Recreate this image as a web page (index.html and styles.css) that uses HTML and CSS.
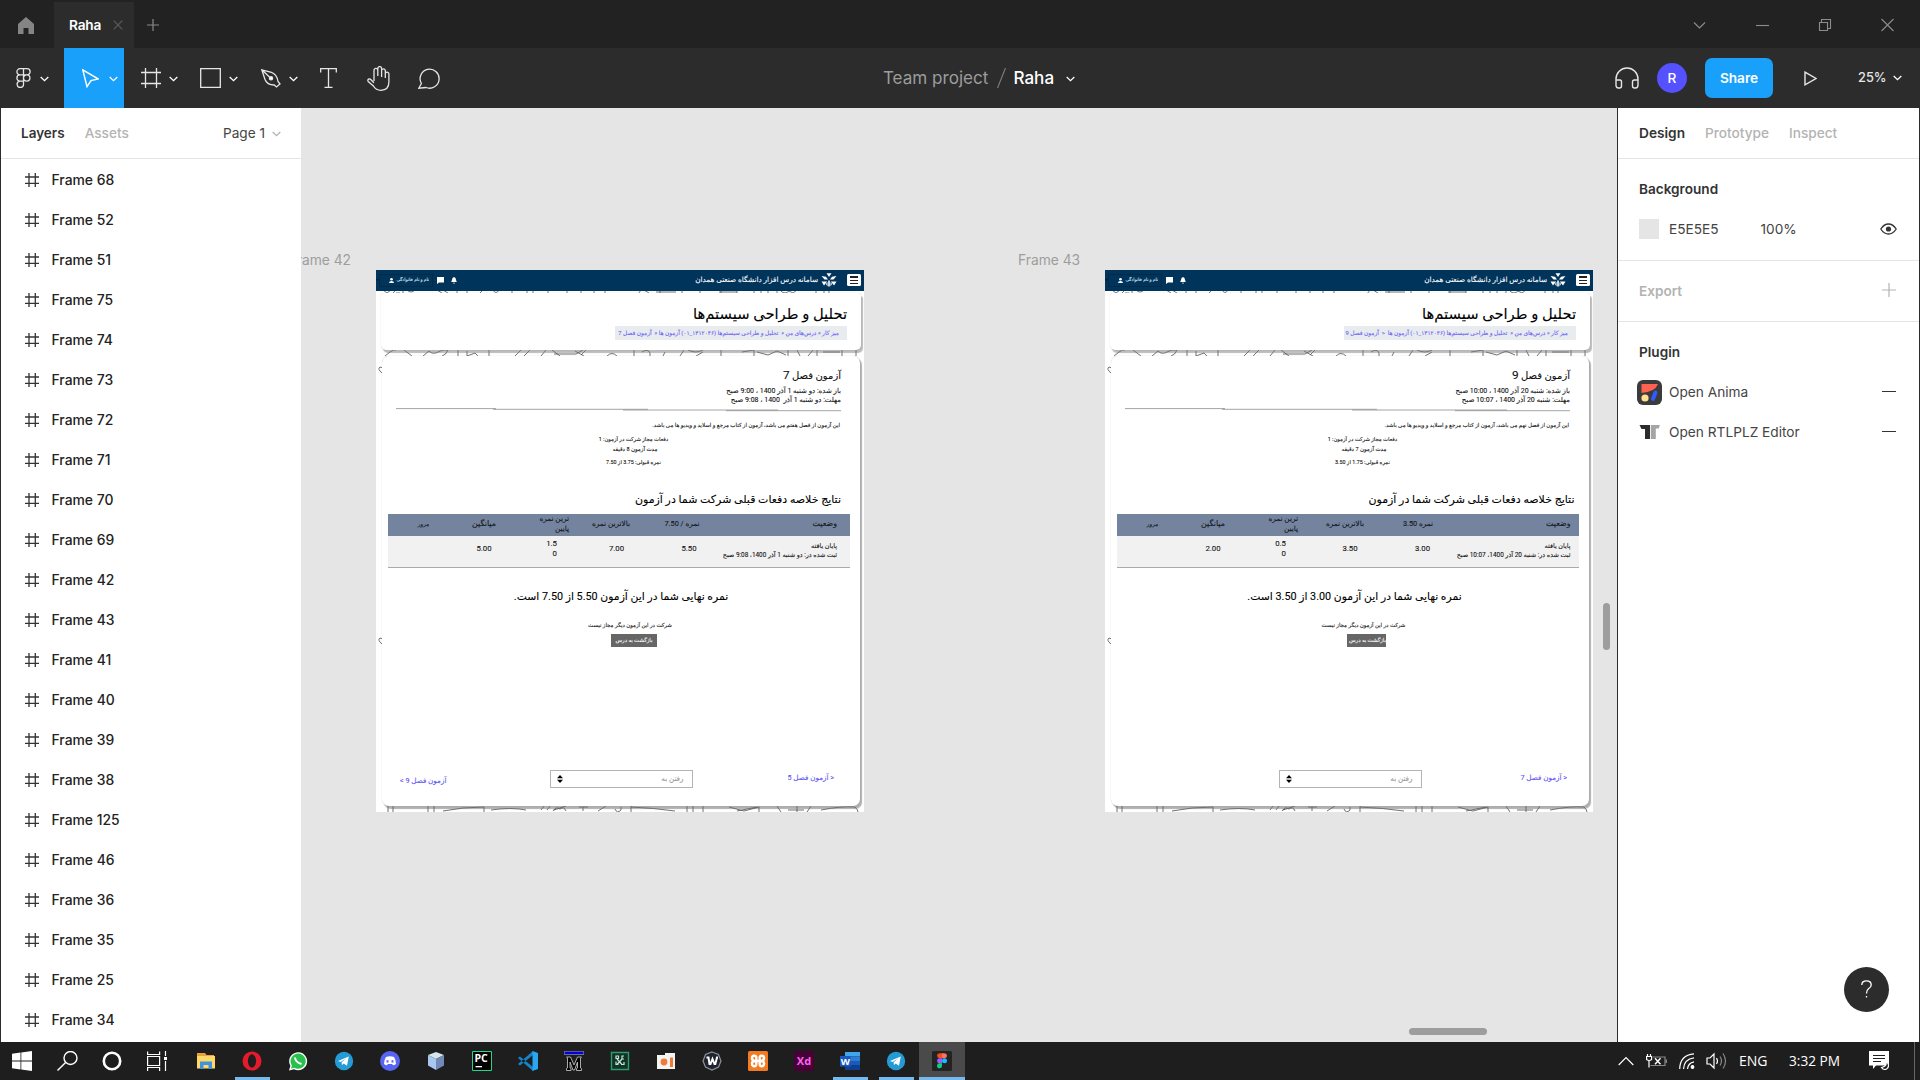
FILE: index.html
```html
<!DOCTYPE html>
<html lang="en">
<head>
<meta charset="utf-8">
<title>Raha</title>
<link rel="stylesheet" href="styles.css">
</head>
<body>
<svg class="defs" width="0" height="0">
  <symbol id="hash" viewBox="0 0 14 14"><path d="M4 0v14M10.3 0v14M0 4h14M0 10.3h14"/></symbol>
  <symbol id="chev" viewBox="0 0 9 6"><path d="M.7 1l3.8 3.7L8.300 1"/></symbol>
  <symbol id="tg" viewBox="0 0 20 20"><circle cx="10" cy="10" r="9.200" fill="#259bd5"/><path fill="#fff" d="M4 9.900L14.800 5.500 13 14.800 9.700 12.400 8 14 7.600 11.300 12 7.600 6.500 11z"/></symbol>
  <symbol id="uni" viewBox="0 0 16 14"><path d="M5.500.3h5L8 4zM.5 3l4.500.8L7 6.500H3.500zM15.500 3l-4.500.8L9 6.500h3.500zM.5 8.500h5.700L3 12.500zM15.500 8.500H9.800l3.200 4zM7.200 7.500h1.600V13.500H7.200zM5 11l1.500-2v4.500zM11 11L9.500 9v4.500z"/></symbol>
  <symbol id="doodle" viewBox="0 0 488 542">
    <path d="M7 20l4 3 4-3M17 23l3-3M20 23h4M27 20v3M31 20q4 4 8 0M61 20l5 3M67 20l5 3M81 20v3M91 20v3M104 23l3-3M117 20q3 5 6 0M136 20v3M151 20v3M157 20v3M172 20v3M191 20v3M205 20v3M218 20v3M229 20v3M262 24l3-4M268 20l5 3M280 22h20M284 20v3M306 20v3M324 20v3M345 20v3M343 22h18M361 20v3M378 20v3M385 20v3M392 20v3M401 20v3M405 21q4 4 8 0l4 2 4-3M440 20v3M448 20v3M453 20v3"/>
    <path d="M9 86l5-4q4-3 6-2M28 80l8 6M47 86l6-5q4 4 9 1t10-2q-2 5-6 6M82 80v6M91 81v5l8-3 3 3M113 80v6M139 86l6-6M148 86l6-6M165 86l5-6M176 80l8 6M178 84h22l7-4M199 81l9 5M205 85l5-5M231 86q5-5 10 0M258 80v6M266 82q6-4 8 1v3M287 86l2-4M304 86l4-6M312 80q8 4 15 0M327 82l-7 4M345 80v6M366 82l12-2v6M381 82l11 3 9-4 9 4M412 80v6M421 80l3 6M437 80l-5 6M441 80v6M447 82h17M466 80v6M480 80v6"/>
    <path d="M6 103q-5-4-2-6l3 1M6 374q-5-4-2-6l3 1M12 536v6M17 536v6M52 536v6M58 536v6M67 541q20-4 41-4M108 537v5M115 540q20-3 35 0M165 540l3-4M171 540l3-4M177 541q3-5 7-2 4-3 6 2M178 540l12-4M203 537h9M207 537v4M222 541l8-5M239 539q2 5 6 1v-3M255 536v6M255 537q23 1 44 4M311 536v6M317 536v6M327 536v6M353 537l15 4 15-4v5M361 541l20-4M401 536l4 6M421 536v6M412 540h16M435 536l-4 6M445 540q20-4 34-3 3 3 3 5"/>
  </symbol>
</svg>

<div class="titlebar">
  <div class="home"><svg width="16" height="17" viewBox="0 0 16 17"><path fill="#858585" d="M0 7l8-7 8 7v10h-5.500v-6h-5v6H0z"/></svg></div>
  <div class="tab"><span>Raha</span><svg width="10" height="10" viewBox="0 0 10 10"><path d="M.7.700l8.600 8.600M9.300.700L.7 9.300"/></svg></div>
  <svg class="plus" width="12" height="12" viewBox="0 0 12 12"><path d="M6 0v12M0 6h12"/></svg>
  <div class="winctl">
    <svg width="62" height="20" viewBox="0 0 62 20"><path d="M25 7.500l5.500 5.500L36 7.500"/></svg>
    <svg width="62" height="20" viewBox="0 0 62 20"><path d="M25 10.500h13"/></svg>
    <svg width="62" height="20" viewBox="0 0 62 20"><path d="M26.500 7.500h8v8h-8zM28.500 7.500v-3h9v9h-3"/></svg>
    <svg width="62" height="20" viewBox="0 0 62 20"><path d="M26.500 4l12 12M38.500 4l-12 12"/></svg>
  </div>
</div>

<div class="toolbar">
  <div class="tools">
    <div class="tool menu"><svg width="15" height="20" viewBox="0 0 15 20"><path d="M4 .7h3.500v6.200H4A3.100 3.100 0 0 1 4 .7zM7.500.7H11a3.100 3.100 0 0 1 0 6.200H7.500zM4 6.900h3.500v6.200H4a3.100 3.100 0 0 1 0-6.200zM7.500 10A3.200 3.100 0 1 0 10.700 6.900 3.100 3.100 0 0 0 7.500 10zM4 13.100h3.500v3a3.200 3.200 0 1 1-3.500-3z"/></svg><svg class="cv" width="9" height="6"><use href="#chev"/></svg></div>
    <div class="tool on"><svg width="17" height="19" viewBox="0 0 17 19"><path d="M.8.900l15.200 9-7 1.700-4 6z"/></svg><svg class="cv" width="9" height="6"><use href="#chev"/></svg></div>
    <div class="tool"><svg width="20" height="20" viewBox="0 0 20 20"><path d="M4.500 0v20M15.500 0v20M0 4.500h20M0 15.500h20"/></svg><svg class="cv" width="9" height="6"><use href="#chev"/></svg></div>
    <div class="tool"><svg width="21" height="20" viewBox="0 0 21 20"><path d="M.7.700h19.600v18.600H.7z"/></svg><svg class="cv" width="9" height="6"><use href="#chev"/></svg></div>
    <div class="tool"><svg width="20" height="19" viewBox="0 0 20 19"><path d="M.8.800l9.700 2.500q5.500 2 6.500 9.200l2 2.500-3.500 3-2.300-2Q6 16 4 10.500zM.8.800l8.400 8"/><circle cx="10" cy="9.300" r="1.600" fill="#fff"/></svg><svg class="cv" width="9" height="6"><use href="#chev"/></svg></div>
    <div class="tool one"><svg width="17" height="20" viewBox="0 0 17 20"><path d="M.7 4.500V.700h15.600v3.800M8.500.700v18.600M4.500 19.300h8"/></svg></div>
    <div class="tool one"><svg width="23" height="25" viewBox="0 0 23 25"><path d="M7 15V4.300a1.900 1.900 0 0 1 3.800 0V10 2.500a1.900 1.900 0 0 1 3.800 0V11 4.300a1.900 1.900 0 0 1 3.700 0V12 8a1.800 1.800 0 0 1 3.600 0v8q0 8-8 8.300-5 0-7.500-4.300L1.200 15.500q-1-2 .8-2.500 1-.2 2 .8l3 3"/></svg></div>
    <div class="tool one"><svg width="22" height="21" viewBox="0 0 22 21"><path d="M.8 20.200l2.600-4.700A9.500 9.500 0 1 1 8 19.500z"/></svg></div>
  </div>
  <div class="filename"><span class="team">Team project</span><svg width="9" height="20" viewBox="0 0 9 20"><path d="M8.500 0L.5 20"/></svg><b>Raha</b><svg class="cv" width="9" height="6"><use href="#chev"/></svg></div>
  <div class="actions">
    <svg width="24" height="22" viewBox="0 0 24 22"><path d="M1 14V12a11 11 0 0 1 22 0v6q0 3-2.500 3h-1q-2 0-2-2v-4q0-2 2-2H23M1 13h4q1.500 0 1.500 2v4q0 2-2 2h-1Q1 21 1 18z"/></svg>
    <span class="avatar">R</span>
    <span class="share">Share</span>
    <svg class="play" width="13" height="15" viewBox="0 0 13 15"><path d="M1 1.200L12 7.500 1 13.800z"/></svg>
    <span class="zoom">25%</span><svg class="cv" width="9" height="6"><use href="#chev"/></svg>
  </div>
</div>

<div class="work">
  <aside class="left">
    <div class="tabs"><b>Layers</b><span>Assets</span><i>Page 1</i><svg class="cv" width="9" height="6"><use href="#chev"/></svg></div>
    <div class="layer"><svg width="14" height="14"><use href="#hash"/></svg>Frame 68</div>
    <div class="layer"><svg width="14" height="14"><use href="#hash"/></svg>Frame 52</div>
    <div class="layer"><svg width="14" height="14"><use href="#hash"/></svg>Frame 51</div>
    <div class="layer"><svg width="14" height="14"><use href="#hash"/></svg>Frame 75</div>
    <div class="layer"><svg width="14" height="14"><use href="#hash"/></svg>Frame 74</div>
    <div class="layer"><svg width="14" height="14"><use href="#hash"/></svg>Frame 73</div>
    <div class="layer"><svg width="14" height="14"><use href="#hash"/></svg>Frame 72</div>
    <div class="layer"><svg width="14" height="14"><use href="#hash"/></svg>Frame 71</div>
    <div class="layer"><svg width="14" height="14"><use href="#hash"/></svg>Frame 70</div>
    <div class="layer"><svg width="14" height="14"><use href="#hash"/></svg>Frame 69</div>
    <div class="layer"><svg width="14" height="14"><use href="#hash"/></svg>Frame 42</div>
    <div class="layer"><svg width="14" height="14"><use href="#hash"/></svg>Frame 43</div>
    <div class="layer"><svg width="14" height="14"><use href="#hash"/></svg>Frame 41</div>
    <div class="layer"><svg width="14" height="14"><use href="#hash"/></svg>Frame 40</div>
    <div class="layer"><svg width="14" height="14"><use href="#hash"/></svg>Frame 39</div>
    <div class="layer"><svg width="14" height="14"><use href="#hash"/></svg>Frame 38</div>
    <div class="layer"><svg width="14" height="14"><use href="#hash"/></svg>Frame 125</div>
    <div class="layer"><svg width="14" height="14"><use href="#hash"/></svg>Frame 46</div>
    <div class="layer"><svg width="14" height="14"><use href="#hash"/></svg>Frame 36</div>
    <div class="layer"><svg width="14" height="14"><use href="#hash"/></svg>Frame 35</div>
    <div class="layer"><svg width="14" height="14"><use href="#hash"/></svg>Frame 25</div>
    <div class="layer"><svg width="14" height="14"><use href="#hash"/></svg>Frame 34</div>
  </aside>

  <main class="canvas">
    <div class="label l42">Frame 42</div>
    <div class="label l43">Frame 43</div>

    <section class="board b42" dir="rtl">
      <svg class="doodles" width="488" height="542"><use href="#doodle"/></svg>
      <header class="nav">
        <span class="burger"><i></i><i></i><i></i></span>
        <svg class="uni" width="16" height="14"><use href="#uni"/></svg>
        <span class="site">سامانه درس افزار دانشگاه صنعتی همدان</span>
        <svg class="bell" width="6" height="7" viewBox="0 0 6 7"><path d="M3 0q2 .5 2 3l.8 2H.2L1 3Q1 .5 3 0zM2 5.700h2L3 7z"/></svg>
        <svg class="chat" width="7" height="7" viewBox="0 0 7 7"><path d="M0 0h7v5.500H2L0 7z"/></svg>
        <span class="user">نام و نام خانوادگی<svg width="5" height="5" viewBox="0 0 5 5"><circle cx="2.500" cy="1.300" r="1.300"/><path d="M0 5q0-2 2.500-2T5 5z"/></svg></span>
        <svg class="caret" width="3" height="2" viewBox="0 0 3 2"><path d="M0 0h3L1.500 2z"/></svg>
      </header>
      <div class="card head">
        <h1>تحلیل و طراحی سیستم‌ها</h1>
        <div class="crumbs">میز کار « درس‌های من « &nbsp;تحلیل و طراحی سیستم‌ها (۱۳۱۲۰۴۶_۰۱) آزمون ها « &nbsp;آزمون فصل 7</div>
      </div>
      <div class="card body">
        <h2>آزمون فصل <span>7</span></h2>
        <p class="date">باز شده: دو شنبه 1 آذر 1400 ، 9:00 صبح</p>
        <p class="date">مهلت: دو شنبه 1 آذر &nbsp;1400 ، 9:08 صبح</p>
        <svg class="rule" width="445" height="4" viewBox="0 0 445 4"><path d="M0 .6h100M97 1.300h155M227 2h155M330 2.700h115"/></svg>
        <p class="desc">این آزمون از فصل هفتم می باشد، آزمون از کتاب مرجع و اسلاید و ویدیو ها می باشد.</p>
        <p class="info i1">دفعات مجاز شرکت در آزمون: 1</p>
        <p class="info i2">مدت آزمون 8 دقیقه</p>
        <p class="info i3">نمره قبولی: 3.75 از 7.50</p>
        <h3>نتایج خلاصه دفعات قبلی شرکت شما در آزمون</h3>
        <div class="grid gh"><span class="c-status">وضعیت</span><span class="c-grade">نمره / 7.50</span><span>بالاترین نمره</span><span class="c-low">ترین نمره<br>پایین</span><span class="c-avg">میانگین</span><span class="c-rev">مرور</span></div>
        <div class="grid gb"><span class="c-status">پایان یافته<br>ثبت شده در: دو شنبه 1 آذر 1400، 9:08 صبح</span><span class="c-grade">5.50</span><span class="c-high">7.00</span><span class="c-low">1.5<br>0</span><span class="c-avg">5.00</span><span></span></div>
        <p class="final">نمره نهایی شما در این آزمون 5.50 از 7.50 است.</p>
        <p class="note">شرکت در این آزمون دیگر مجاز نیست</p>
        <div class="back"><span>بازگشت به درس</span></div>
        <div class="pager"><a class="prev">&lt; آزمون فصل 5</a><span class="select">رفتن به<svg width="6" height="8" viewBox="0 0 6 8"><path d="M0 3.200L3 0l3 3.200zM0 4.800h6L3 8z"/></svg></span><a class="next">آزمون فصل 9 &gt;</a></div>
      </div>
    </section>

    <section class="board b43" dir="rtl">
      <svg class="doodles" width="488" height="542"><use href="#doodle"/></svg>
      <header class="nav">
        <span class="burger"><i></i><i></i><i></i></span>
        <svg class="uni" width="16" height="14"><use href="#uni"/></svg>
        <span class="site">سامانه درس افزار دانشگاه صنعتی همدان</span>
        <svg class="bell" width="6" height="7" viewBox="0 0 6 7"><path d="M3 0q2 .5 2 3l.8 2H.2L1 3Q1 .5 3 0zM2 5.700h2L3 7z"/></svg>
        <svg class="chat" width="7" height="7" viewBox="0 0 7 7"><path d="M0 0h7v5.500H2L0 7z"/></svg>
        <span class="user">نام و نام خانوادگی<svg width="5" height="5" viewBox="0 0 5 5"><circle cx="2.500" cy="1.300" r="1.300"/><path d="M0 5q0-2 2.500-2T5 5z"/></svg></span>
        <svg class="caret" width="3" height="2" viewBox="0 0 3 2"><path d="M0 0h3L1.500 2z"/></svg>
      </header>
      <div class="card head">
        <h1>تحلیل و طراحی سیستم‌ها</h1>
        <div class="crumbs">میز کار « درس‌های من « &nbsp;تحلیل و طراحی سیستم‌ها (۱۳۱۲۰۴۶_۰۱) آزمون ها &nbsp;&lt; &nbsp;آزمون فصل 9</div>
      </div>
      <div class="card body">
        <h2>آزمون فصل <span>9</span></h2>
        <p class="date">باز شده: شنبه 20 آذر 1400 ، 10:00 صبح</p>
        <p class="date">مهلت: شنبه 20 آذر 1400 ، 10:07 صبح</p>
        <svg class="rule" width="445" height="4" viewBox="0 0 445 4"><path d="M0 .6h100M97 1.300h155M227 2h155M330 2.700h115"/></svg>
        <p class="desc">این آزمون از فصل نهم می باشد، آزمون از کتاب مرجع و اسلاید و ویدیو ها می باشد.</p>
        <p class="info i1">دفعات مجاز شرکت در آزمون: 1</p>
        <p class="info i2">مدت آزمون 7 دقیقه</p>
        <p class="info i3">نمره قبولی: 1.75 از 3.50</p>
        <h3>نتایج خلاصه دفعات قبلی شرکت شما در آزمون</h3>
        <div class="grid gh"><span class="c-status">وضعیت</span><span class="c-grade">نمره 3.50</span><span class="c-high">بالاترین نمره</span><span class="c-low">ترین نمره<br>پایین</span><span class="c-avg">میانگین</span><span class="c-rev">مرور</span></div>
        <div class="grid gb"><span class="c-status">پایان یافته<br>ثبت شده در: شنبه 20 آذر 1400، 10:07 صبح</span><span class="c-grade">3.00</span><span class="c-high">3.50</span><span class="c-low">0.5<br>0</span><span class="c-avg">2.00</span><span></span></div>
        <p class="final">نمره نهایی شما در این آزمون 3.00 از 3.50 است.</p>
        <p class="note">شرکت در این آزمون دیگر مجاز نیست</p>
        <div class="back"><span>بازگشت به درس</span></div>
        <div class="pager"><a class="prev">&lt; آزمون فصل 7</a><span class="select">رفتن به<svg width="6" height="8" viewBox="0 0 6 8"><path d="M0 3.200L3 0l3 3.200zM0 4.800h6L3 8z"/></svg></span><a class="next"></a></div>
      </div>
    </section>
    <div class="thumb-v"></div>
    <div class="thumb-h"></div>
  </main>

  <aside class="right">
    <div class="tabs"><b>Design</b><span>Prototype</span><span>Inspect</span></div>
    <div class="sec bg">
      <h4>Background</h4>
      <div class="row"><i class="swatch"></i><span class="hex">E5E5E5</span><span>100%</span><svg class="end" width="17" height="12" viewBox="0 0 17 12"><path fill="none" stroke="#333" stroke-width="1.300" d="M.8 6Q4 1 8.500 1t7.700 5Q13 11 8.500 11T.8 6z"/><circle cx="8.500" cy="6" r="2.600" fill="#333"/></svg></div>
    </div>
    <div class="sec export"><h4>Export</h4><svg class="end" width="14" height="14" viewBox="0 0 14 14"><path stroke="#b3b3b3" stroke-width="1.200" d="M7 0v14M0 7h14"/></svg></div>
    <div class="sec plugin">
      <h4>Plugin</h4>
      <div class="row"><svg class="ic" width="25" height="25" viewBox="0 0 25 25"><rect width="25" height="25" rx="6" fill="#3b3b3b"/><path fill="#ff6250" d="M4.500 4h16.500q-3 8-16.500 9z"/><circle cx="8" cy="18" r="3.600" fill="#ffdf90"/><path stroke="#2f5bff" stroke-width="4" stroke-linecap="round" d="M18.500 12.500L16 19"/></svg><span>Open Anima</span><i class="minus end"></i></div>
      <div class="row"><svg class="ic" width="25" height="16" viewBox="0 0 25 16"><path fill="#2c2c2c" d="M2.500 1h10.500v14H8V5H4.500z"/><path fill="#a5a5a5" d="M13.800 15V1h9l-1 3.500h-3V15z"/></svg><span>Open RTLPLZ Editor</span><i class="minus end"></i></div>
    </div>
    <div class="help"><svg width="11" height="18" viewBox="0 0 11 18"><path fill="none" stroke="#fff" stroke-width="1.300" d="M.8 5Q.8.800 5.500.800T10.200 5Q10.200 7 7.500 8.800 5.500 10.200 5.500 13.500M5.500 16v1.600"/></svg></div>
  </aside>
</div>

<footer class="taskbar">
  <div class="cell sys"><svg width="20" height="20" viewBox="0 0 20 20"><path fill="#fff" d="M0 2.800L8.500 1.600V9.500H0zM9.300 1.500L20 0v9.500H9.300zM0 10.400h8.500v8L0 17.200zM9.300 10.400H20V20L9.300 18.500z"/></svg></div>
  <div class="cell sys"><svg width="21" height="20" viewBox="0 0 21 20"><path fill="none" stroke="#fff" stroke-width="1.400" d="M8.600 11.500L.5 19.500"/><circle cx="13.500" cy="7" r="6.500" fill="none" stroke="#fff" stroke-width="1.400"/></svg></div>
  <div class="cell sys"><svg width="20" height="20" viewBox="0 0 20 20"><circle cx="10" cy="10" r="8.200" fill="none" stroke="#fff" stroke-width="2.600"/></svg></div>
  <div class="cell sys"><svg width="20" height="20" viewBox="0 0 20 20"><path fill="none" stroke="#fff" stroke-width="1.200" d="M.6.500v3h12v-3M.6 5.500h12v9H.6zM.6 20v-3.500h12V20M18.500 0v5M18.500 10v10"/><path fill="#fff" d="M17 6h3v3h-3z"/></svg></div>
  <div class="cell first"><svg width="20" height="20" viewBox="0 0 20 20"><path fill="#e8a33d" d="M1 2h8l1.500 2H18v4H1z"/><path fill="#ffd869" d="M1 5h18v12.500H1z"/><path fill="#3f94dc" d="M4 18V10.500h12V18h-3.500v-4h-5v4z"/></svg></div>
  <div class="cell run"><svg width="20" height="20" viewBox="0 0 20 20"><path fill="#e31b2d" fill-rule="evenodd" d="M10 .5a9.500 9.500 0 1 1 0 19 9.500 9.500 0 0 1 0-19zM10 3.200c-5.400 1-5.400 12.600 0 13.600 5.400-1 5.400-12.600 0-13.600z"/></svg></div>
  <div class="cell"><svg width="20" height="20" viewBox="0 0 20 20"><path fill="#fff" d="M1 19.500l1.400-4.700A9 9 0 1 1 6 18.200z"/><path fill="#29c04d" d="M3 17.500l.9-3A7.600 7.600 0 1 1 6.300 16.700z"/><path fill="none" stroke="#fff" stroke-width="2" d="M7 6.500q.5 5 6.500 6.500"/></svg></div>
  <div class="cell"><svg width="20" height="20"><use href="#tg"/></svg></div>
  <div class="cell"><svg width="20" height="20" viewBox="0 0 20 20"><circle cx="10" cy="10" r="10" fill="#5865f2"/><path fill="#fff" d="M6 6q4-1.600 8 0 2 3 2 7-1.500 1.200-3 1.200l-.8-1.200H7.800L7 14.200q-1.500 0-3-1.200 0-4 2-7z"/><path fill="#5865f2" d="M6.500 9.300h2v2.200h-2zM11.500 9.300h2v2.200h-2z"/></svg></div>
  <div class="cell"><svg width="20" height="20" viewBox="0 0 20 20"><path fill="#d5e5ec" d="M10 1l8 3-8 4-8-4z"/><path fill="#a9c8f0" d="M2 4l8 4v11l-8-4.500z"/><path fill="#7389b8" d="M18 4l-8 4v11l8-4.500z"/></svg></div>
  <div class="cell"><svg width="20" height="20" viewBox="0 0 20 20"><path fill="#000" stroke="#21d789" d="M.5.500h19v19H.5z"/><text x="2.500" y="11" fill="#fff" font-size="10.500" font-weight="700" font-family="Open Sans">PC</text><path fill="#fff" d="M3.500 15H10v1.300H3.500z"/></svg></div>
  <div class="cell"><svg width="20" height="20" viewBox="0 0 20 20"><path fill="#1684ca" d="M0 7l2-1.500L15 16v4zM0 13l2 1.500L15 4V0z"/><path fill="#2aa7f2" d="M14.500 0L20 2v16l-5.500 2z"/></svg></div>
  <div class="cell"><svg width="20" height="20" viewBox="0 0 20 20"><path fill="#0000d8" stroke="#ccc" stroke-width=".5" d="M.3.300h19.400v3.200H.3z"/><path fill="#000" stroke="#bbb" stroke-width=".9" d="M2.500 19.500v-2l1-.5V7l-1-1h4l3.500 8 3.500-8h4l-1 1v10l1 .5v2h-5v-2l1-.5v-6l-3 8h-1.500l-3-8v6l1 .5v2z"/></svg></div>
  <div class="cell"><svg width="20" height="20" viewBox="0 0 20 20"><path fill="#113328" stroke="#2c9c6c" stroke-width="1.400" d="M1.500 1.500h17v17h-17z"/><path fill="none" stroke="#c4e6d6" stroke-width="1.200" d="M6 5h2.500v2.500H6zM14 5h-2v3h2M7 8l5 5.500M12 8l-5 5.500M6 10.500v3h2.500M14 11v2.500h-3"/></svg></div>
  <div class="cell"><svg width="20" height="20" viewBox="0 0 20 20"><path fill="#f4f4f2" d="M1 4h8V2h10v16H1z"/><circle cx="8" cy="11" r="3.400" fill="#f07a3a"/><path fill="#f07a3a" d="M14 6.500h3V16h-3z"/></svg></div>
  <div class="cell"><svg width="20" height="20" viewBox="0 0 20 20"><path fill="#20242e" stroke="#8d929c" stroke-width="1.200" d="M10 1l6.500 2.500L19 10l-2.500 6L10 19l-6.500-3L1 10l2.500-6.500z"/><path fill="none" stroke="#fff" stroke-width="2" d="M4.500 6.500h2l1 6.500h1L10.500 8l2 5h.8L15 6.500h1"/></svg></div>
  <div class="cell"><svg width="20" height="20" viewBox="0 0 20 20"><rect width="20" height="20" rx="1.500" fill="#f37b21"/><path fill="none" stroke="#fff" stroke-width="2.400" stroke-linejoin="round" d="M7 10H13M7 10Q4 9.500 4 7.200T6.300 4.800 8.300 7v6q0 2.200-2 2.200T4 12.800 7 10M13 10q3-.5 3-2.800t-2.300-2.400-2 2.200v6q0 2.200 2 2.200T16 12.800 13 10"/></svg></div>
  <div class="cell"><svg width="20" height="20" viewBox="0 0 20 20"><rect width="20" height="20" rx="2" fill="#470137"/><text x="2.800" y="14" fill="#ff61f6" font-size="11" font-weight="700" font-family="Open Sans">Xd</text></svg></div>
  <div class="cell run"><svg width="20" height="20" viewBox="0 0 20 20"><path fill="#41a5ee" d="M5 1h15v4.500H5z"/><path fill="#2b7cd3" d="M5 5.500h15V10H5z"/><path fill="#185abd" d="M5 10h15v4.500H5z"/><path fill="#103f91" d="M5 14.500h15V19H5z"/><path fill="#185abd" d="M0 5h10.500v10.500H0z"/><text x=".7" y="13.600" fill="#fff" font-size="9.500" font-weight="700" font-family="Open Sans">W</text></svg></div>
  <div class="cell run"><svg width="20" height="20"><use href="#tg"/></svg></div>
  <div class="cell active"><svg width="20" height="20" viewBox="0 0 20 20"><rect width="20" height="20" rx="1.500" fill="#232323"/><path fill="#f24e1e" d="M10 2.200H7.600a2.500 2.500 0 0 0 0 5H10z"/><path fill="#ff7262" d="M10 2.200h2.500a2.500 2.500 0 0 1 0 5H10z"/><path fill="#a259ff" d="M10 7.300H7.600a2.500 2.500 0 0 0 0 5H10z"/><circle cx="12.500" cy="9.800" r="2.500" fill="#1abcfe"/><path fill="#0acf83" d="M10 12.300H7.600A2.500 2.500 0 1 0 10 14.800z"/></svg></div>
  <div class="tray">
    <svg width="16" height="10" viewBox="0 0 16 10"><path d="M.7 9L8 1.500 15.300 9"/></svg>
    <svg class="bat" width="21" height="14" viewBox="0 0 21 14"><path d="M1.500 0v2M4.500 0v2M.6 2.500h5v3q-2.500 2-5 0zM3 7v6.500"/><path stroke="#888" d="M7 3h12v8.500H4.500M20.400 5.500v3.500"/><path stroke-width="1.400" d="M9 4.300l5.500 6M14.500 4.300L9 10.300"/></svg>
    <svg class="wifi" width="16" height="16" viewBox="0 0 16 16"><path d="M.7 16Q1 2 15 .8M4.500 16Q5 6 15 4.800M8.500 16Q9 10 15 8.800"/><circle cx="13.500" cy="14" r="1.300" fill="#fff"/></svg>
    <svg class="spk" width="21" height="18" viewBox="0 0 21 18"><path d="M1 6h3l4-4v14l-4-4H1zM10.500 6q2 3 0 6"/><path stroke="#888" d="M14 4.500q3 4.500 0 9M17 1.500q5 7.500 0 15"/></svg>
    <span class="lang">ENG</span><span class="time">3:32 PM</span>
    <svg class="note-ic" width="20" height="20" viewBox="0 0 20 20"><path fill="#fff" stroke="none" d="M0 0h20v14.500H7L4 18v-3.500H0z"/><path stroke="#1e1e1e" d="M4 4.500h12M4 7.500h12M4 10.500h8"/><path fill="#1e1e1e" stroke="#fff" d="M16.500 10q2.500 5-4 6.500 2 3 5 1.500 3-2 1.500-5.500-.8-1.700-2.500-2.500z"/></svg>
    <i class="peek"></i>
  </div>
</footer>
</body>
</html>
```
FILE: styles.css
```css
*{box-sizing:border-box}
body{margin:0;width:1920px;height:1080px;overflow:hidden;display:flex;flex-direction:column;background:#2c2c2c;font:500 13.65px/20px Inter,"Liberation Sans",sans-serif;color:#333}
h1,h2,h3,h4,p{margin:0;font-weight:400}
i{font-style:normal}
svg{display:block;flex:none;fill:none}
.defs{position:absolute}

.titlebar{height:48px;flex:none;background:#222;display:flex;align-items:center;padding-top:2px}
.home{width:54px;padding-left:18px}
.tab{width:80px;height:47px;background:#2c2c2c;color:#fff;display:flex;align-items:center;padding:0 0 1px 15px;font-size:13.65px;font-weight:600;letter-spacing:-.2px}
.tab span{width:44px}
.tab svg{stroke:#5c5c5c;stroke-width:1.200}
.plus{margin-left:13px;stroke:#8a8a8a;stroke-width:1.200}
.winctl{margin-left:auto;display:flex;padding-right:3.500px}
.winctl svg{stroke:#8c8c8c;stroke-width:1.100}

.toolbar{height:60px;flex:none;background:#2c2c2c;display:grid;grid-template-columns:1fr auto 1fr;align-items:center}
.tools{display:flex;height:60px}
.tool{width:60px;display:flex;align-items:center;justify-content:flex-end;padding-right:6.500px;gap:7.500px;stroke:#e6e6e6;stroke-width:1.300}
.tool .cv{margin-top:1px}
.tool.menu{width:64px;padding-right:15px;gap:9px}
.tool.on{background:#18a0fb;stroke:#fff;stroke-width:1.500;gap:9.500px}
.tool.one{width:50px;justify-content:center;padding:0 1px 0 0}
.cv{stroke:#fff;stroke-width:1.300;overflow:visible}
.filename{display:flex;align-items:center;font-size:17.1px;font-weight:400;color:#9c9c9c;padding-left:38px}
.filename svg{stroke:#7d7d7d;stroke-width:1.200;margin:0 7px 0 9px}
.filename b{font-weight:500;color:#fff}
.filename .cv{stroke:#fff;margin:1px 0 0 12px}
.actions{display:flex;align-items:center;justify-content:flex-end;padding-right:18.500px;stroke:#e6e6e6;stroke-width:1.400;color:#fff}
.avatar{width:30px;height:30px;border-radius:50%;background:#5551ff;text-align:center;line-height:30px;margin:0 18px 0 18px}
.share{width:68px;height:40px;line-height:40px;border-radius:7px;background:#18a0fb;text-align:center;font-weight:600}
.play{margin:0 41px 0 31px}
.zoom{font-size:12.800px;width:34.500px;color:#e6e6e6}

.work{height:934px;flex:none;display:flex;padding:0 1px;overflow:hidden}
.left{width:300px;background:#fff}
.right{width:302px;background:#fff;border-left:1px solid #2c2c2c;position:relative}
.tabs{height:51px;border-bottom:1px solid #e5e5e5;display:flex;align-items:center;padding:0 20px;font-weight:500;color:#b3b3b3}
.tabs b{font-weight:600;color:#333;margin-right:20px;font-size:13.500px}
.left .tabs i{margin-left:auto;color:#444;font-weight:400}
.left .tabs .cv{stroke:#b3b3b3;margin:2px 0 0 7px}
.layer{height:40px;display:flex;align-items:center;gap:13px;padding-left:23.500px;font-weight:500;font-size:13.900px;color:#222}
.layer svg{stroke:#333;stroke-width:1.300}
.left .tabs+.layer{margin-top:1px}

.right .tabs{padding-left:21px}
.right .tabs b{font-size:13.700px}
.right .tabs span+span{margin-left:20px}
.right h4{font-weight:600;color:#333;font-size:13.600px}
.sec{border-bottom:1px solid #e5e5e5;padding:0 20px 0 21px;font-weight:400;color:#444}
.row{height:40px;display:flex;align-items:center}
.end{margin-left:auto}
.bg{height:102px;padding-top:20px}
.bg .row{margin-top:10px;padding-right:2px}
.swatch{width:20px;height:20px;background:#e5e5e5;margin-right:10px}
.hex{width:91.500px}
.export{height:61px;display:flex;align-items:center;padding-right:23px}
.export h4{color:#b3b3b3}
.export .end{margin-top:-3px}
.plugin{border:0;padding-top:20px}
.plugin h4{margin-bottom:10px}
.plugin .row{padding-right:3px;font-size:13.700px}
.ic{margin:0 7px 0 -2px}
.minus{width:14px;height:1.500px;background:#333;margin-top:-1px}
.help{position:absolute;right:30px;bottom:30.500px;width:45px;height:45px;border-radius:50%;background:#2c2c2c;display:flex;align-items:center;justify-content:center}

.canvas{flex:1;position:relative;overflow:hidden;background:#e5e5e5}
.label{position:absolute;top:142px;font-weight:400;font-size:13.800px;color:#9d9d9d}
.l42{left:-12px}
.l43{left:717px}
.thumb-v{position:absolute;right:7px;top:494.500px;width:7px;height:47px;border-radius:4px;background:#9d9d9d}
.thumb-h{position:absolute;left:1108px;top:920px;width:78px;height:7px;border-radius:4px;background:#9d9d9d}

.board{position:absolute;top:162px;width:488px;height:542px;background:#fff;overflow:hidden;font-family:Roboto,"DejaVu Sans",sans-serif;font-weight:400;color:#111;white-space:nowrap;-webkit-text-stroke:.1px}
.b42{left:75px}
.b43{left:804px}
.doodles{position:absolute;left:0;top:0;stroke:#4d4d4d;stroke-width:.8}
.nav{position:relative;height:20.500px;background:#00345a;display:flex;align-items:center;padding-right:3px;color:#fff}
.nav svg{fill:#fff}
.burger{width:14px;height:12px;border-radius:1.500px;background:#fff;display:flex;flex-direction:column;justify-content:center;gap:2px;padding:0 3px}
.burger i{height:1.200px;background:#222}
.nav .uni{margin:0 10px 0 3px}
.site{font-size:7.260px;width:361px}
.bell{margin-left:7px}
.chat{margin-left:4px}
.user{font-size:4.400px;line-height:12px;height:13px;width:54px;border:.5px solid #012a49;display:flex;align-items:center;gap:3px;padding-right:3px;color:#dfe6ec}
.nav .caret{fill:#001a30}
.card{position:relative;background:#fff}
.head{height:57px;margin:2.500px 4.500px 0 4.500px;width:480px;margin-right:3px;border-radius:3px 3px 5px 5px;box-shadow:2px 3px 1px rgba(120,120,120,.5),0 0 1px #bbb;padding:7.500px 14px 0 0}
.head h1{font-size:14.740px;line-height:26px;color:#000}
.crumbs{width:232px;height:14px;line-height:14px;margin-top:-.5px;background:#e9ecef;color:#6b62f5;font-size:5.830px;padding-right:8px}
.body{height:450px;width:478px;margin:6px 4px 0 0;border-radius:7px;box-shadow:2px 2.500px 1px rgba(110,110,110,.55),0 0 1px #bbb;padding-top:8.500px}
.body h2{font-size:10px;line-height:20px;padding-right:19px;margin-bottom:1px}
.body h2 span{font-size:11.800px}
.date{font-size:7px;line-height:9.500px;padding-right:19px}
.rule{stroke:#8d8d8d;stroke-width:.8;margin:2px 19px 0 0}
.desc{font-size:5.510px;line-height:10px;margin-top:8px;padding-right:20px}
.info{text-align:center;font-size:5.350px;line-height:10px;padding-left:25px}
.i1{margin-top:4px}
.i2{line-height:11px;padding-left:28px;font-size:5.540px}
.i3{margin-top:2px}
.body h3{font-size:10.970px;line-height:20px;margin-top:23px;padding-right:19px;color:#000}
.grid{display:grid;grid-template-columns:136px 64px 78px 40px 96px 48px;align-items:center;text-align:center;width:462px;margin-right:10px;font-size:7.300px}
.grid>span{display:block}
.gh{height:22px;margin-top:4px;padding-bottom:1px;background:#74849e;color:#10141c}
.gb{height:32px;background:#f1f1f1;border-bottom:1px solid #aaa;font-size:7.800px;line-height:10px;padding-bottom:5px}
.grid .c-status{text-align:right;padding-right:13px}
.gh .c-status{font-size:7.900px}
.gb .c-status{font-size:6.420px;line-height:9px;padding-top:5px}
.gb .c-grade{padding-left:14px}
.gb .c-high{padding-left:11px}
.gh .c-low{text-align:right;line-height:10.500px;padding-right:3px}
.gb .c-low{text-align:right;padding-right:15px;line-height:10px}
.gh .c-avg{font-size:7.900px}
.gh .c-rev{font-size:5.500px;padding-left:23px}
.final{font-size:10.800px;line-height:20px;margin-top:19.500px;text-align:center;color:#000}
.note{font-size:5.460px;line-height:10px;margin-top:12.500px;text-align:center;padding-left:18px}
.back{width:46px;height:12.500px;line-height:12px;margin:4.500px 203px 0 0;background:#666;color:#fff;font-size:5.380px;text-align:center;overflow:hidden}
.pager{display:flex;align-items:center;height:18px;margin-top:123.500px;padding:0 26px 0 18px;font-size:7.180px;color:#5d55f2}
.prev{width:141.500px;line-height:14px;margin-bottom:2px}
.select{width:143px;height:18px;border:1px solid #b4b4b4;display:flex;align-items:center;justify-content:space-between;padding:0 8px 0 6px;color:#999}
.select svg{fill:#000}
.next{margin:4px auto 0 0}
.b43 .body h3{padding-right:14.500px}
.b43 .c-status{padding-right:8.500px}
.b43 .gh .c-grade{margin-right:-14px}
.b43 .gh .c-high{margin-right:-10px}
.b43 .gb .c-grade{padding-left:23px}
.b43 .gb .c-high{padding-left:20px}
.b43 .final{padding-left:9px}
.b43 .note{padding-left:27px}
.b43 .back{width:39px}
.b43 .back span{margin-right:-2px}
.b43 .pager{padding-right:22px}
.b43 .prev{width:145.500px}

.taskbar{height:38px;flex:none;background:#1e1e1e;display:flex}
.cell{width:46px;display:flex;align-items:center;justify-content:center}
.sys{width:45px;padding-right:1px}
.first{margin-left:3px}
.run{background:linear-gradient(#76b9ed,#76b9ed) center bottom/35px 3px no-repeat}
.active{background:linear-gradient(#76b9ed,#76b9ed) center bottom/46px 3px no-repeat #4a4a4a}
.tray{margin-left:auto;display:flex;align-items:center;color:#fff;font:400 14px/20px "Open Sans","Noto Sans",sans-serif;stroke:#fff;stroke-width:1.200}
.bat{margin-left:12px}
.wifi{margin-left:12px}
.spk{margin-left:11px}
.lang{margin-left:12px;width:50px}
.time{width:80px;font-size:13.650px}
.peek{width:1px;height:38px;background:#666;margin:0 5px 0 25px}
```
